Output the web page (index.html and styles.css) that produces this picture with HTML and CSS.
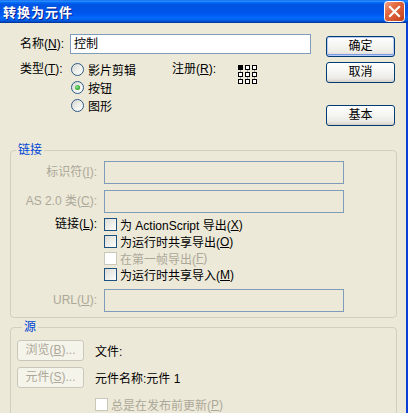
FILE: index.html
```html
<!DOCTYPE html>
<html>
<head>
<meta charset="utf-8">
<link rel="stylesheet" href="styles.css">
</head>
<body>
<div class="window">
  <div class="titlebar">
    <span class="title">转换为元件</span>
    <svg class="close" width="21" height="21" viewBox="0 0 21 21">
      <defs>
        <linearGradient id="cg" x1="0" y1="0" x2="1" y2="1">
          <stop offset="0" stop-color="#F3A88E"/>
          <stop offset="0.35" stop-color="#E46A42"/>
          <stop offset="1" stop-color="#C0401B"/>
        </linearGradient>
      </defs>
      <rect x="0.5" y="0.5" width="20" height="20" rx="3" fill="url(#cg)" stroke="#ffffff"/>
      <path d="M6 6 L15 15 M15 6 L6 15" stroke="#ffffff" stroke-width="2.2" stroke-linecap="square"/>
    </svg>
  </div>
  <div class="body">
    <div class="top">
      <div class="main">
        <div class="row name-row">
          <span class="lbl">名称(<u>N</u>):</span>
          <div class="input white">控制</div>
        </div>
        <div class="row type-row">
          <span class="lbl">类型(<u>T</u>):</span>
          <div class="radios">
            <div class="radio"><span class="rb"></span>影片剪辑</div>
            <div class="radio"><span class="rb on"></span>按钮</div>
            <div class="radio"><span class="rb"></span>图形</div>
          </div>
          <span class="reg-lbl">注册(<u>R</u>):</span>
          <svg class="reg" width="19" height="19" viewBox="0 0 19 19">
            <g stroke="#a0a0a0" stroke-width="1">
              <path d="M2.5 5 V7 M9.5 5 V7 M16.5 5 V7 M2.5 12 V14 M9.5 12 V14 M16.5 12 V14"/>
            </g>
            <g fill="#ffffff" stroke="#000000" stroke-width="1">
              <rect x="0.5" y="0.5" width="4" height="4" fill="#000000"/>
              <rect x="7.5" y="0.5" width="4" height="4"/>
              <rect x="14.5" y="0.5" width="4" height="4"/>
              <rect x="0.5" y="7.5" width="4" height="4"/>
              <rect x="7.5" y="7.5" width="4" height="4"/>
              <rect x="14.5" y="7.5" width="4" height="4"/>
              <rect x="0.5" y="14.5" width="4" height="4"/>
              <rect x="7.5" y="14.5" width="4" height="4"/>
              <rect x="14.5" y="14.5" width="4" height="4"/>
            </g>
          </svg>
        </div>
      </div>
      <div class="buttons">
        <div class="btn default">确定</div>
        <div class="btn cancel">取消</div>
        <div class="btn basic">基本</div>
      </div>
    </div>

    <fieldset class="group link">
      <legend>链接</legend>
      <div class="frow">
        <span class="flbl dis">标识符(<u>I</u>):</span>
        <div class="input dis-input"></div>
      </div>
      <div class="frow r2">
        <span class="flbl dis">AS 2.0 类(<u>C</u>):</span>
        <div class="input dis-input"></div>
      </div>
      <div class="frow chk-row">
        <span class="flbl">链接(<u>L</u>):</span>
        <div class="checks">
          <div class="check"><span class="cb"></span>为 ActionScript 导出(<u>X</u>)</div>
          <div class="check"><span class="cb"></span>为运行时共享导出(<u>O</u>)</div>
          <div class="check short dis"><span class="cb dis-cb"></span>在第一帧导出(<u>F</u>)</div>
          <div class="check"><span class="cb"></span>为运行时共享导入(<u>M</u>)</div>
        </div>
      </div>
      <div class="frow url-row">
        <span class="flbl dis">URL(<u>U</u>):</span>
        <div class="input dis-input"></div>
      </div>
    </fieldset>

    <fieldset class="group source">
      <legend>源</legend>
      <div class="srow">
        <div class="btn src dis-btn">浏览(<u>B</u>)...</div>
        <span>文件:</span>
      </div>
      <div class="srow s2">
        <div class="btn src dis-btn">元件(<u>S</u>)...</div>
        <span>元件名称:元件 1</span>
      </div>
      <div class="check s3 dis"><span class="cb dis-cb"></span>总是在发布前更新(<u>P</u>)</div>
    </fieldset>
  </div>
</div>
</body>
</html>
```

FILE: styles.css
```css
* { box-sizing: border-box; }
html, body { margin: 0; padding: 0; }
body {
  width: 408px;
  height: 413px;
  overflow: hidden;
  background: #ECE9D8;
  font-family: "Liberation Sans", "Noto Sans CJK SC", sans-serif;
  font-size: 12px;
  color: #000;
}
u { text-decoration: underline; }

.window {
  width: 408px;
  height: 413px;
  display: flex;
  flex-direction: column;
  overflow: hidden;
}

.titlebar {
  flex: none;
  height: 23px;
  display: flex;
  align-items: center;
  justify-content: space-between;
  padding: 0 3px 0 3px;
  background: linear-gradient(to bottom,
    #0058EE 0%, #3A93FF 4%, #288EFF 6%, #127DFF 8%, #036FFC 10%,
    #0262EE 14%, #0057E5 20%, #0054E3 24%, #0055EB 56%, #005BF5 66%,
    #026AFE 76%, #0062EF 86%, #0052D6 92%, #0040AB 96%, #003092 100%);
}
.title {
  color: #fff;
  font-family: "Noto Sans CJK SC", sans-serif;
  font-weight: bold;
  font-size: 13px;
  letter-spacing: 1px;
  line-height: 23px;
  text-shadow: 1px 1px 0 #0A1E8C;
}
.close { display: block; flex: none; }

.body {
  flex: 1;
  background: #ECE9D8;
  border-right: 2px solid #0B3FD5;
  padding-top: 11px;
}

.top {
  display: flex;
  padding: 0 11px 0 20px;
}
.main { width: 291px; flex: none; }
.row { display: flex; }
.name-row { align-items: center; height: 20px; }
.lbl { width: 50px; flex: none; line-height: 18px; }
.input {
  border: 1px solid #7F9DB9;
  background: #fff;
}
.input.white {
  width: 241px;
  height: 20px;
  padding-left: 3px;
  line-height: 18px;
}

.type-row { margin-top: 6px; align-items: flex-start; }
.radios { width: 101px; flex: none; margin-left: 1px; display: flex; flex-direction: column; }
.radio { display: flex; align-items: center; height: 18px; }
.rb {
  position: relative;
  width: 13px;
  height: 13px;
  flex: none;
  margin-right: 4px;
  border-radius: 50%;
  border: 1px solid #2F5A8A;
  background: linear-gradient(135deg, #D8D8D2 0%, #F2F2EE 60%, #FFFFFF 100%);
}
.rb.on::after {
  content: "";
  position: absolute;
  left: 3px;
  top: 3px;
  width: 5px;
  height: 5px;
  border-radius: 50%;
  background: radial-gradient(circle at 40% 40%, #9BE39B 0%, #3CB43C 50%, #1E8A1E 100%);
}
.reg-lbl { width: 66px; flex: none; line-height: 18px; }
.reg { display: block; margin-top: 5px; }

.buttons {
  margin-left: auto;
  width: 69px;
  flex: none;
  display: flex;
  flex-direction: column;
  padding-top: 2px;
}
.btn {
  height: 21px;
  border: 1px solid #003C74;
  border-radius: 3px;
  background: linear-gradient(to bottom, #FFFFFF 0%, #F4F4F0 50%, #ECEBE6 80%, #D6D0C5 100%);
  text-align: center;
  line-height: 19px;
}
.buttons .btn { width: 69px; }
.btn.default {
  box-shadow: inset 0 0 0 1px #B7CBF5, inset 0 -1px 0 1px #7D9BE6;
}
.btn.cancel { margin-top: 5px; }
.btn.basic { margin-top: 22px; }

.group {
  margin: 16px 9px 0 10px;
  padding: 3px 0 5px 0;
  border: 1px solid #D0D0BF;
  border-radius: 4px;
  min-width: 0;
}
.group legend {
  padding: 0 2px;
  margin-left: 5px;
  color: #0046D5;
  line-height: 16px;
  font-size: 12px;
}

.frow { display: flex; align-items: center; }
.flbl {
  width: 86px;
  flex: none;
  margin-right: 7px;
  text-align: right;
  line-height: 17px;
  white-space: nowrap;
}
.dis { color: #ACA899; }
.dis-input {
  width: 240px;
  height: 23px;
  background: #ECE9D8;
}
.frow.r2 { margin-top: 6px; }
.chk-row { margin-top: 3px; align-items: flex-start; }
.checks { display: flex; flex-direction: column; }
.check { display: flex; align-items: center; height: 17px; white-space: nowrap; }
.check.short { height: 16px; }
.cb {
  width: 13px;
  height: 13px;
  flex: none;
  margin-right: 3px;
  border: 1px solid #1C5180;
  background: linear-gradient(135deg, #DCDCD7 0%, #F0F0EC 60%, #FFFFFF 100%);
}
.cb.dis-cb { border-color: #CAC8BB; background: #FFFFFF; }
.url-row { margin-top: 6px; }

.group.source {
  margin-top: 1px;
  padding: 5px 0 0 6px;
  height: 200px;
}
.srow { display: flex; align-items: center; }
.btn.src { width: 67px; flex: none; margin-right: 11px; }
.btn.dis-btn {
  border-color: #C9C7BA;
  color: #ACA899;
  background: #F5F4EA;
}
.srow.s2 { margin-top: 6px; }
.check.s3 { margin-top: 8px; margin-left: 78px; }
```
